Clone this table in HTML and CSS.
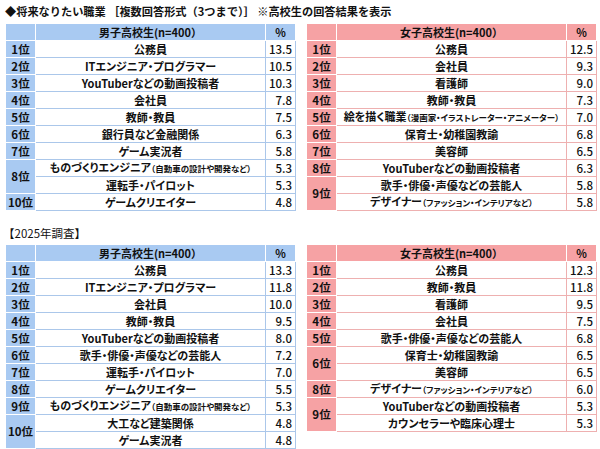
FILE: index.html
```html
<!DOCTYPE html>
<html lang="ja">
<head>
<meta charset="utf-8">
<title>将来なりたい職業</title>
<link rel="stylesheet" href="styles.css">
</head>
<body>
<div class="page">
  <h1 class="title">◆将来なりたい職業 ［複数回答形式（3つまで）］ ※高校生の回答結果を表示</h1>
  <div class="pair">
    <table class="rk boys">
      <colgroup><col class="c-rank"><col class="c-name"><col class="c-pct"></colgroup>
      <tr class="head"><th></th><th>男子高校生(n=400）</th><th>%</th></tr>
      <tr><th>1位</th><td class="nm">公務員</td><td class="pc">13.5</td></tr>
      <tr><th>2位</th><td class="nm">ITエンジニア・プログラマー</td><td class="pc">10.5</td></tr>
      <tr><th>3位</th><td class="nm">YouTuberなどの動画投稿者</td><td class="pc">10.3</td></tr>
      <tr><th>4位</th><td class="nm">会社員</td><td class="pc">7.8</td></tr>
      <tr><th>5位</th><td class="nm">教師・教員</td><td class="pc">7.5</td></tr>
      <tr><th>6位</th><td class="nm">銀行員など金融関係</td><td class="pc">6.3</td></tr>
      <tr><th>7位</th><td class="nm">ゲーム実況者</td><td class="pc">5.8</td></tr>
      <tr><th rowspan="2">8位</th><td class="nm">ものづくりエンジニア<small>（自動車の設計や開発など）</small></td><td class="pc">5.3</td></tr>
      <tr><td class="nm">運転手・パイロット</td><td class="pc">5.3</td></tr>
      <tr><th>10位</th><td class="nm">ゲームクリエイター</td><td class="pc">4.8</td></tr>
    </table>
    <table class="rk girls">
      <colgroup><col class="c-rank"><col class="c-name"><col class="c-pct"></colgroup>
      <tr class="head"><th></th><th>女子高校生(n=400）</th><th>%</th></tr>
      <tr><th>1位</th><td class="nm">公務員</td><td class="pc">12.5</td></tr>
      <tr><th>2位</th><td class="nm">会社員</td><td class="pc">9.3</td></tr>
      <tr><th>3位</th><td class="nm">看護師</td><td class="pc">9.0</td></tr>
      <tr><th>4位</th><td class="nm">教師・教員</td><td class="pc">7.3</td></tr>
      <tr><th>5位</th><td class="nm">絵を描く職業<small>（漫画家・イラストレーター・アニメーター）</small></td><td class="pc">7.0</td></tr>
      <tr><th>6位</th><td class="nm">保育士・幼稚園教諭</td><td class="pc">6.8</td></tr>
      <tr><th>7位</th><td class="nm">美容師</td><td class="pc">6.5</td></tr>
      <tr><th>8位</th><td class="nm">YouTuberなどの動画投稿者</td><td class="pc">6.3</td></tr>
      <tr><th rowspan="2">9位</th><td class="nm">歌手・俳優・声優などの芸能人</td><td class="pc">5.8</td></tr>
      <tr><td class="nm">デザイナー<small>（ファッション・インテリアなど）</small></td><td class="pc">5.8</td></tr>
    </table>
  </div>
  <p class="sub">【2025年調査】</p>
  <div class="pair">
    <table class="rk boys">
      <colgroup><col class="c-rank"><col class="c-name"><col class="c-pct"></colgroup>
      <tr class="head"><th></th><th>男子高校生(n=400）</th><th>%</th></tr>
      <tr><th>1位</th><td class="nm">公務員</td><td class="pc">13.3</td></tr>
      <tr><th>2位</th><td class="nm">ITエンジニア・プログラマー</td><td class="pc">11.8</td></tr>
      <tr><th>3位</th><td class="nm">会社員</td><td class="pc">10.0</td></tr>
      <tr><th>4位</th><td class="nm">教師・教員</td><td class="pc">9.5</td></tr>
      <tr><th>5位</th><td class="nm">YouTuberなどの動画投稿者</td><td class="pc">8.0</td></tr>
      <tr><th>6位</th><td class="nm">歌手・俳優・声優などの芸能人</td><td class="pc">7.2</td></tr>
      <tr><th>7位</th><td class="nm">運転手・パイロット</td><td class="pc">7.0</td></tr>
      <tr><th>8位</th><td class="nm">ゲームクリエイター</td><td class="pc">5.5</td></tr>
      <tr><th>9位</th><td class="nm">ものづくりエンジニア<small>（自動車の設計や開発など）</small></td><td class="pc">5.3</td></tr>
      <tr><th rowspan="2">10位</th><td class="nm">大工など建築関係</td><td class="pc">4.8</td></tr>
      <tr><td class="nm">ゲーム実況者</td><td class="pc">4.8</td></tr>
    </table>
    <table class="rk girls">
      <colgroup><col class="c-rank"><col class="c-name"><col class="c-pct"></colgroup>
      <tr class="head"><th></th><th>女子高校生(n=400）</th><th>%</th></tr>
      <tr><th>1位</th><td class="nm">公務員</td><td class="pc">12.3</td></tr>
      <tr><th>2位</th><td class="nm">教師・教員</td><td class="pc">11.8</td></tr>
      <tr><th>3位</th><td class="nm">看護師</td><td class="pc">9.5</td></tr>
      <tr><th>4位</th><td class="nm">会社員</td><td class="pc">7.5</td></tr>
      <tr><th>5位</th><td class="nm">歌手・俳優・声優などの芸能人</td><td class="pc">6.8</td></tr>
      <tr><th rowspan="2">6位</th><td class="nm">保育士・幼稚園教諭</td><td class="pc">6.5</td></tr>
      <tr><td class="nm">美容師</td><td class="pc">6.5</td></tr>
      <tr><th>8位</th><td class="nm">デザイナー<small>（ファッション・インテリアなど）</small></td><td class="pc">6.0</td></tr>
      <tr><th rowspan="2">9位</th><td class="nm">YouTuberなどの動画投稿者</td><td class="pc">5.3</td></tr>
      <tr><td class="nm">カウンセラーや臨床心理士</td><td class="pc">5.3</td></tr>
    </table>
  </div>
</div>
</body>
</html>
```

FILE: styles.css
```css
html, body {
  margin: 0;
  padding: 0;
  background: #ffffff;
}

body {
  font-family: "Noto Sans CJK JP", "Noto Sans", sans-serif;
  color: #111111;
  width: 600px;
  height: 449px;
  overflow: hidden;
}

.page {
  padding: 0 5px;
}

.title {
  margin: 0;
  height: 23px;
  padding-top: 4px;
  box-sizing: border-box;
  font-size: 11.2px;
  line-height: 15px;
  font-weight: 700;
  white-space: nowrap;
}

.sub {
  margin: 0;
  height: 33px;
  padding-top: 15px;
  box-sizing: border-box;
  font-size: 11.5px;
  line-height: 15px;
  font-weight: 400;
  margin-left: -2px;
}

.pair {
  display: flex;
  gap: 10px;
  align-items: flex-start;
}

.rk {
  width: 290px;
  table-layout: fixed;
  border-collapse: collapse;
  font-size: 11px;
  line-height: 15px;
}

.c-rank { width: 30px; }
.c-name { width: 230px; }
.c-pct { width: 30px; }

.rk tr {
  height: 17px;
}

.rk th,
.rk td {
  padding: 0;
  white-space: nowrap;
  overflow: hidden;
}

.rk th {
  font-weight: 700;
  font-size: 11.5px;
  text-align: center;
  border: 1px solid #ffffff;
}

.rk .head th {
  font-size: 11px;
}

.rk .nm {
  text-align: center;
  font-weight: 700;
  font-feature-settings: "palt";
}

.rk .pc {
  text-align: right;
  padding-right: 3px;
  font-weight: 500;
  font-size: 11.5px;
}

.rk small {
  font-size: 8.5px;
  font-weight: 700;
}

.boys th {
  background: #a9caf2;
}

.boys td {
  border: 1px solid #abc7ea;
}

.girls th {
  background: #f6a2a4;
}

.girls td {
  border: 1px solid #eeb0b0;
}
```
